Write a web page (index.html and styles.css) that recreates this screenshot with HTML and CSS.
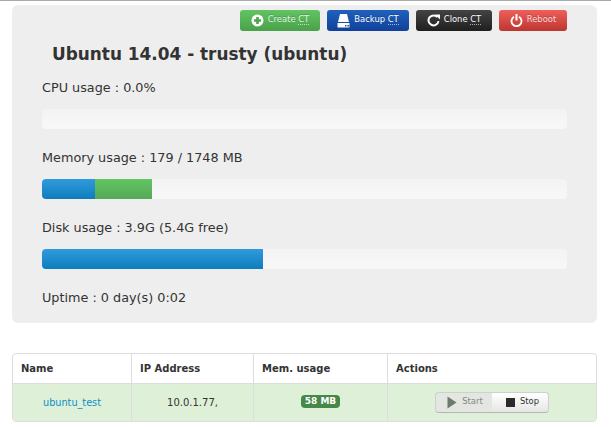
FILE: index.html
```html
<!DOCTYPE html>
<html lang="en">
<head>
<meta charset="utf-8">
<title>Ubuntu 14.04</title>
<link rel="stylesheet" href="styles.css">
</head>
<body>
<section class="panel">
  <div class="toolbar">
    <a class="btn btn-green"><svg class="ico" width="13" height="13" viewBox="0 0 13 13"><circle cx="6.5" cy="6.5" r="6" fill="#fff"/><path d="M5.2 3h2.6v2.2H10v2.6H7.8V10H5.2V7.8H3V5.2h2.200z" fill="#4da54d"/></svg><span>Create <abbr>CT</abbr></span></a>
    <a class="btn btn-blue"><svg class="ico" width="13" height="14" viewBox="0 0 13 14"><path d="M3 0h7l2 8H1z" fill="#fff"/><path d="M0.500 9h12v4.500h-12z" fill="#fff"/><rect x="8" y="11" width="1.500" height="1.500" fill="#1a4fa0"/><rect x="10.500" y="11" width="1.500" height="1.500" fill="#1a4fa0"/></svg><span>Backup <abbr>CT</abbr></span></a>
    <a class="btn btn-dark"><svg class="ico" width="13" height="13" viewBox="0 0 13 13"><path d="M10.400 3.200A5 5 0 1 0 11.500 7" fill="none" stroke="#fff" stroke-width="2"/><path d="M8 0l5 0v5z" fill="#fff" transform="translate(0 .5)"/></svg><span>Clone <abbr>CT</abbr></span></a>
    <a class="btn btn-red"><svg class="ico" width="13" height="13" viewBox="0 0 13 13"><path d="M4 2.800A5 5 0 1 0 9 2.800" fill="none" stroke="#fff" stroke-width="1.800"/><path d="M6.500 0v6.500" stroke="#fff" stroke-width="2"/></svg><span>Reboot</span></a>
  </div>
  <h1 class="title">Ubuntu 14.04 - trusty (ubuntu)</h1>
  <p class="stat">CPU usage : 0.0%</p>
  <div class="progress"></div>
  <p class="stat">Memory usage : 179 / 1748 MB</p>
  <div class="progress"><div class="bar bar-blue" style="width:53px"></div><div class="bar bar-green" style="width:57px"></div></div>
  <p class="stat">Disk usage : 3.9G (5.4G free)</p>
  <div class="progress"><div class="bar bar-blue" style="width:221px"></div></div>
  <p class="stat stat-last">Uptime : 0 day(s) 0:02</p>
</section>

<table class="grid">
  <colgroup><col class="c1"><col class="c2"><col class="c3"><col class="c4"></colgroup>
  <thead>
    <tr><th>Name</th><th>IP Address</th><th>Mem. usage</th><th>Actions</th></tr>
  </thead>
  <tbody>
    <tr>
      <td><a class="link">ubuntu_test</a></td>
      <td>10.0.1.77,</td>
      <td><span class="badge">58 MB</span></td>
      <td>
        <div class="group">
          <a class="gbtn gbtn-off"><svg width="10" height="13" viewBox="0 0 10 13"><path d="M0.500 0.500L9.500 6.500L0.500 12.500z" fill="#6d7a6d"/></svg><span>Start</span></a>
          <a class="gbtn gbtn-on"><svg width="9" height="9" viewBox="0 0 9 9"><rect width="9" height="9" fill="#2b2b2b"/></svg><span>Stop</span></a>
        </div>
      </td>
    </tr>
  </tbody>
</table>
</body>
</html>
```
FILE: styles.css
```css
* { box-sizing: border-box; }
html, body { height: 100%; }
body {
  margin: 0;
  padding: 5px 14px 0 12px;
  background: #fff;
  border-top: 1px solid #a9a9a9;
  font-family: "DejaVu Sans", sans-serif;
  color: #333;
  overflow: hidden;
}
.panel {
  width: 585px;
  height: 318px;
  margin-top: -1px;
  padding: 5px 30px 0;
  background: #eee;
  border-radius: 6px;
}
.toolbar {
  display: flex;
  justify-content: flex-end;
  gap: 7px;
}
.btn {
  display: flex;
  align-items: center;
  justify-content: center;
  gap: 4px;
  height: 21px;
  border-radius: 3px;
  font-size: 8.400px;
  color: #fff;
  text-shadow: 0 -1px 0 rgba(0,0,0,.2);
}
.btn span { position: relative; top: -1.500px; }
.btn abbr { border-bottom: 1px dotted rgba(255,255,255,.6); }
.btn-green { width: 80px; background: linear-gradient(#62c462, #4aa14a); color: #e4f4e4; }
.btn-blue { width: 82px; background: linear-gradient(#1f62bd, #11409a); }
.btn-dark { width: 76px; background: linear-gradient(#444, #1f1f1f); }
.btn-red { width: 68px; background: linear-gradient(#ee5f5b, #bd362f); color: #fbdcdc; }
.title {
  margin: 11px 0 0 10px;
  font-size: 16.900px;
  line-height: 24px;
  font-weight: 700;
  color: #333;
}
.stat {
  margin: 0;
  font-size: 12.800px;
  line-height: 18px;
  color: #333;
}
.progress {
  display: flex;
  height: 20px;
  margin: 12px 0 20px;
  background: linear-gradient(#f3f3f3, #f8f8f8);
  border-radius: 4px;
  overflow: hidden;
}
.title + .stat { margin-top: 13px; }
.bar { height: 100%; }
.bar-blue { background: linear-gradient(#2f9bdc, #0e7cbd); }
.bar-green { background: linear-gradient(#62c462, #57a957); }
.grid {
  width: 585px;
  margin-top: 30px;
  table-layout: fixed;
  border-collapse: separate;
  border-spacing: 0;
  border: 1px solid #ddd;
  border-radius: 4px;
  font-size: 10px;
  color: #333;
}
.c1 { width: 118px; }
.c2 { width: 122px; }
.c3 { width: 134px; }
th {
  height: 29px;
  padding: 0 8px;
  text-align: left;
  font-weight: 700;
  border-left: 1px solid #ddd;
}
td {
  height: 38px;
  padding: 0;
  text-align: center;
  background: #dff0d8;
  border-top: 1px solid #ddd;
  border-left: 1px solid #ddd;
}
tbody td:first-child, th:first-child { border-left: 0; }
tbody td:first-child { border-bottom-left-radius: 3px; }
tbody td:last-child { border-bottom-right-radius: 3px; }
.link { color: #0b8fc9; font-size: 9.700px; }
.badge {
  display: inline-block;
  padding: 0 4px;
  line-height: 13px;
  font-size: 9px;
  font-weight: 700;
  color: #fff;
  background: #468847;
  border-radius: 4px;
  position: relative;
  top: -1px;
}
.group {
  display: inline-flex;
  vertical-align: middle;
  height: 21px;
  font-size: 8.400px;
}
.gbtn {
  display: flex;
  align-items: center;
  justify-content: center;
  gap: 5px;
  height: 21px;
  border: 1px solid #cfcfcf;
  border-bottom-color: #b5b5b5;
}
.gbtn span { position: relative; top: -1.500px; }
.gbtn-off {
  width: 57px;
  padding-left: 2px;
  color: #7f8a7f;
  background: #e3e6e1;
  border-radius: 4px 0 0 4px;
  border-right: 0;
}
.gbtn-on {
  width: 57px;
  padding-left: 5px;
  color: #333;
  background: linear-gradient(#fff, #e6e6e6);
  border-radius: 0 4px 4px 0;
  border-left: 0;
}
```
